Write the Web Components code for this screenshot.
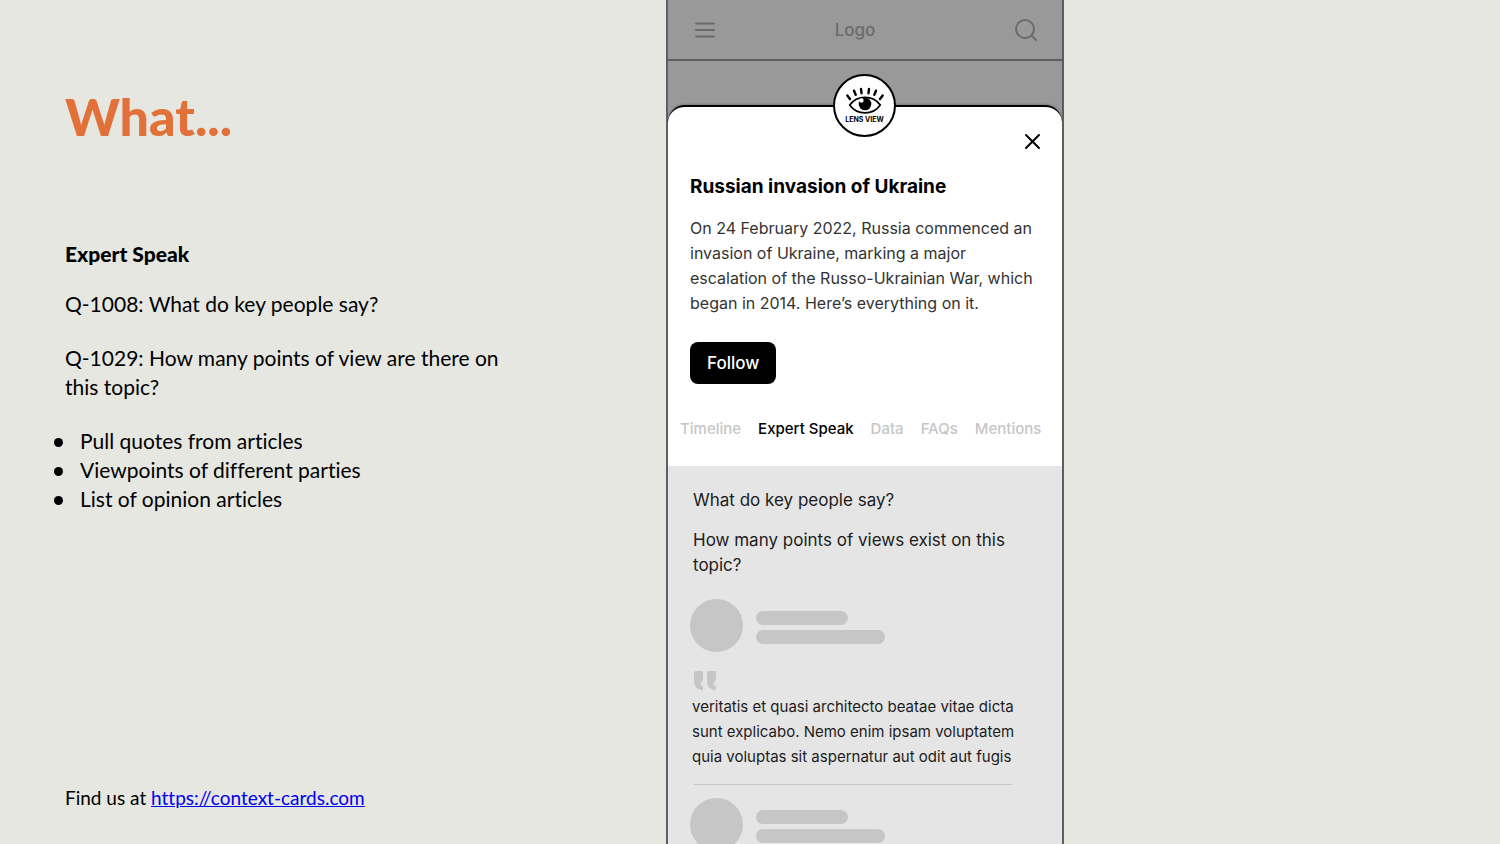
<!DOCTYPE html>
<html lang="en">
<head>
<meta charset="utf-8">
<meta name="viewport" content="width=device-width, initial-scale=1">
<title>Context Cards</title>
<style>
    :root {
        --paper: #e6e7e1;
        --accent: #e27039;
        --skeleton: #c6c6c6;
        --ui-font: Inter, "Liberation Sans", sans-serif;
        --slide-font: Lato, "Open Sans", sans-serif;
    }
    body {
        margin: 0;
        background: var(--paper);
        color: #000;
        font-family: var(--slide-font);
    }
    /* hanging round bullets, left of the text column */
    slide-notes li {
        display: flex;
        align-items: center;
        gap: 17px;
    }
    slide-notes li::before {
        content: "";
        width: 9px;
        height: 9px;
        margin-top: 3px;
        border-radius: 50%;
        background: currentColor;
    }
</style>
</head>
<body>
<slide-page>
    <slide-notes slot="notes" heading="What...">
        <h2>Expert Speak</h2>
        <p>Q-1008: What do key people say?</p>
        <p>Q-1029: How many points of view are there on this topic?</p>
        <ul>
            <li>Pull quotes from articles</li>
            <li>Viewpoints of different parties</li>
            <li>List of opinion articles</li>
        </ul>
        <span slot="footer">Find us at <a href="https://context-cards.com">https://context-cards.com</a></span>
    </slide-notes>
    <phone-frame slot="phone">
        <app-bar slot="bar">Logo</app-bar>
        <lens-sheet>
            <lens-badge slot="badge">LENS VIEW</lens-badge>
            <topic-intro slot="intro" heading="Russian invasion of Ukraine">
                On 24 February 2022, Russia commenced an invasion of Ukraine, marking a major escalation of the Russo-Ukrainian War, which began in 2014. Here’s everything on it.
            </topic-intro>
            <tab-strip slot="tabs" tabs="Timeline,Expert Speak,Data,FAQs,Mentions" active="Expert Speak"></tab-strip>
            <question-list>
                <p>What do key people say?</p>
                <p>How many points of views exist on this topic?</p>
            </question-list>
            <quote-card>
                <person-skeleton slot="person"></person-skeleton>
                veritatis et quasi architecto beatae vitae dicta sunt explicabo. Nemo enim ipsam voluptatem quia voluptas sit aspernatur aut odit aut fugis
            </quote-card>
            <person-skeleton></person-skeleton>
        </lens-sheet>
    </phone-frame>
</slide-page>

<script>
class BaseElement extends HTMLElement {
    constructor() {
        super();
        this.attachShadow({ mode: 'open' });
    }

    connectedCallback() {
        this.shadowRoot.innerHTML = this.render();
    }
}

class SlidePage extends BaseElement {
    render() {
        return `
            <style>
                :host {
                    display: grid;
                    grid-template-columns: 666fr 398fr 436fr;
                    height: 100vh;
                    overflow: hidden;
                }
                ::slotted(*) {
                    min-width: 0;
                    min-height: 0;
                }
            </style>
            <slot name="notes"></slot>
            <slot name="phone"></slot>
        `;
    }
}

class SlideNotes extends BaseElement {
    render() {
        return `
            <style>
                :host {
                    display: flex;
                    flex-direction: column;
                    box-sizing: border-box;
                    padding: 86px 160px 32px 65px;
                    font-size: 21px;
                    line-height: 29px;
                    font-variant-ligatures: none;
                }
                h1 {
                    margin: 0 0 93px;
                    color: var(--accent);
                    font-size: 52px;
                    font-weight: 900;
                    line-height: 60px;
                }
                ::slotted(h2) {
                    margin: 0 0 21px;
                    font-size: 21px;
                    font-weight: 900;
                }
                ::slotted(p) {
                    margin: 0 0 25px;
                }
                ::slotted(ul) {
                    margin: 0 0 0 -11px;
                    padding: 0;
                }
                footer {
                    margin-top: auto;
                    font-size: 19px;
                    line-height: 28px;
                }
            </style>
            <h1>${this.getAttribute('heading')}</h1>
            <slot></slot>
            <footer><slot name="footer"></slot></footer>
        `;
    }
}

class PhoneFrame extends BaseElement {
    render() {
        return `
            <style>
                :host {
                    display: flex;
                    flex-direction: column;
                    box-sizing: border-box;
                    border: solid #5e5e5e;
                    border-width: 0 2px;
                    background: #999;
                    font-family: var(--ui-font);
                    overflow: hidden;
                }
                main {
                    padding-top: 44px;
                }
            </style>
            <slot name="bar"></slot>
            <main><slot></slot></main>
        `;
    }
}

class AppBar extends BaseElement {
    render() {
        return `
            <style>
                :host {
                    display: grid;
                    flex-shrink: 0;
                    grid-template-columns: 1fr auto 1fr;
                    align-items: center;
                    height: 59px;
                    padding: 0 24px 0 26px;
                    border-bottom: 2px solid #5e5e5e;
                    color: #6b6b6b;
                    font-size: 17px;
                    font-weight: 500;
                }
                button {
                    display: flex;
                    padding: 0;
                    border: 0;
                    background: none;
                    color: inherit;
                    cursor: pointer;
                }
                .search {
                    justify-self: end;
                }
                span {
                    margin-right: 22px;
                }
                svg {
                    fill: none;
                    stroke: currentColor;
                    stroke-width: 2;
                    stroke-linecap: round;
                }
            </style>
            <button aria-label="Menu">
                <svg width="22" height="24" viewBox="0 0 22 24"><path d="M2 5.500h18M2 12h18M2 18.500h18"/></svg>
            </button>
            <span><slot></slot></span>
            <button class="search" aria-label="Search">
                <svg width="24" height="24" viewBox="0 0 24 24"><circle cx="11" cy="11" r="9"/><path d="M17.500 17.500 22 22"/></svg>
            </button>
        `;
    }
}

class LensSheet extends BaseElement {
    render() {
        return `
            <style>
                :host {
                    display: block;
                    position: relative;
                    border-top: 2px solid #000;
                    border-radius: 17px 17px 0 0;
                    background: #fff;
                    box-shadow: 0 0 3px rgba(0, 0, 0, 0.4);
                }
                ::slotted(lens-badge) {
                    position: absolute;
                    top: -33px;
                    left: calc(50% - 32px);
                }
                .close {
                    display: flex;
                    margin-left: auto;
                    padding: 26px 21px 0 0;
                    border: 0;
                    background: none;
                    cursor: pointer;
                }
                .panel {
                    padding: 22px 50px 0 22px;
                    background: #e5e5e5;
                }
            </style>
            <slot name="badge"></slot>
            <button class="close" aria-label="Close">
                <svg width="17" height="17" viewBox="0 0 17 17" fill="none" stroke="#000" stroke-width="2" stroke-linecap="round"><path d="M2 2l13 13M15 2 2 15"/></svg>
            </button>
            <slot name="intro"></slot>
            <slot name="tabs"></slot>
            <section class="panel"><slot></slot></section>
        `;
    }
}

class LensBadge extends BaseElement {
    render() {
        return `
            <style>
                :host {
                    display: flex;
                    flex-direction: column;
                    align-items: center;
                    box-sizing: border-box;
                    width: 63px;
                    height: 63px;
                    padding-top: 10px;
                    border: 2px solid #000;
                    border-radius: 50%;
                    background: #fff;
                    font-size: 7px;
                    font-weight: 700;
                    line-height: 10px;
                    white-space: nowrap;
                }
                svg {
                    flex-shrink: 0;
                }
            </style>
            <svg width="40" height="29" viewBox="0 0 40 29" fill="none" stroke="#000" stroke-linecap="round">
                <path stroke-width="2.400" d="M2.300 9.500 5 13M9 4.700 10.700 8.800M16 3 16.500 7.200M24 3 23.500 7.200M31 4.700 29.300 8.800M37.700 9.500 35 13"/>
                <path stroke-width="1.700" stroke-linejoin="round" d="M4.700 19C12 8.700 28 8.700 35.300 19C28 29.500 12 29.500 4.700 19Z"/>
                <circle cx="20" cy="18" r="6.300" fill="#000" stroke="none"/>
                <circle cx="16.400" cy="14.500" r="2.200" fill="#fff" stroke="none"/>
            </svg>
            <slot></slot>
        `;
    }
}

class TopicIntro extends BaseElement {
    render() {
        return `
            <style>
                :host {
                    display: block;
                    padding: 24px 28px 0 22px;
                    color: #333;
                    font-size: 16px;
                    line-height: 25px;
                }
                h2 {
                    margin: 0 0 16px;
                    color: #000;
                    font-size: 19px;
                    font-weight: 700;
                    line-height: 26px;
                }
                p {
                    margin: 0 0 26px;
                }
                button {
                    height: 42px;
                    padding: 0 17px;
                    border: 0;
                    border-radius: 8px;
                    background: #000;
                    color: #fff;
                    font-family: inherit;
                    font-size: 17px;
                    font-weight: 500;
                    cursor: pointer;
                }
            </style>
            <h2>${this.getAttribute('heading')}</h2>
            <p><slot></slot></p>
            <button>Follow</button>
        `;
    }
}

class TabStrip extends BaseElement {
    render() {
        const active = this.getAttribute('active');
        return `
            <style>
                :host {
                    display: block;
                    padding: 33px 12px 25px;
                }
                nav {
                    display: flex;
                    gap: 17px;
                }
                button {
                    padding: 0;
                    border: 0;
                    background: none;
                    color: #c6c6c6;
                    font-family: inherit;
                    font-size: 15px;
                    font-weight: 500;
                    line-height: 24px;
                    white-space: nowrap;
                    cursor: pointer;
                }
                .active {
                    color: #000;
                }
            </style>
            <nav>
                ${this.getAttribute('tabs').split(',').map(tab => `
                    <button class="${tab === active ? 'active' : ''}">${tab}</button>
                `).join('')}
            </nav>
        `;
    }
}

class QuestionList extends BaseElement {
    render() {
        return `
            <style>
                :host {
                    display: block;
                    padding: 0 0 6px 3px;
                    color: #1c1c1c;
                    font-size: 17px;
                    line-height: 25px;
                }
                ::slotted(p) {
                    margin: 0 0 15px;
                }
            </style>
            <slot></slot>
        `;
    }
}

class PersonSkeleton extends BaseElement {
    render() {
        return `
            <style>
                :host {
                    display: flex;
                    align-items: center;
                    gap: 13px;
                }
                .avatar {
                    width: 53px;
                    height: 53px;
                    border-radius: 50%;
                    background: var(--skeleton);
                }
                .lines {
                    display: grid;
                    gap: 5px;
                    padding-top: 3px;
                }
                .lines i {
                    width: 92px;
                    height: 14px;
                    border-radius: 7px;
                    background: var(--skeleton);
                }
                .lines i + i {
                    width: 129px;
                }
            </style>
            <div class="avatar"></div>
            <div class="lines"><i></i><i></i></div>
        `;
    }
}

class QuoteCard extends BaseElement {
    render() {
        return `
            <style>
                :host {
                    display: block;
                    padding-bottom: 13px;
                    color: #1c1c1c;
                    font-size: 15px;
                    line-height: 25px;
                }
                blockquote {
                    margin: 19px 0 0 4px;
                    padding-bottom: 15px;
                    border-bottom: 1px solid var(--skeleton);
                }
                svg {
                    display: block;
                    fill: var(--skeleton);
                }
                p {
                    margin: 3px -8px 0 -2px;
                }
            </style>
            <slot name="person"></slot>
            <blockquote>
                <svg width="22" height="20" viewBox="0 0 22 20">
                    <path id="mark" d="M1.500 0H7.500Q9 0 9 1.500V8Q9 10.500 7 11.500Q5.500 13 7.500 14.500Q9 15 9 16.500V18Q9 19.500 7 19Q0 17.500 0 10V1.500Q0 0 1.500 0Z"/>
                    <use href="#mark" x="13"/>
                </svg>
                <p><slot></slot></p>
            </blockquote>
        `;
    }
}

customElements.define('slide-page', SlidePage);
customElements.define('slide-notes', SlideNotes);
customElements.define('phone-frame', PhoneFrame);
customElements.define('app-bar', AppBar);
customElements.define('lens-sheet', LensSheet);
customElements.define('lens-badge', LensBadge);
customElements.define('topic-intro', TopicIntro);
customElements.define('tab-strip', TabStrip);
customElements.define('question-list', QuestionList);
customElements.define('person-skeleton', PersonSkeleton);
customElements.define('quote-card', QuoteCard);
</script>
</body>
</html>
